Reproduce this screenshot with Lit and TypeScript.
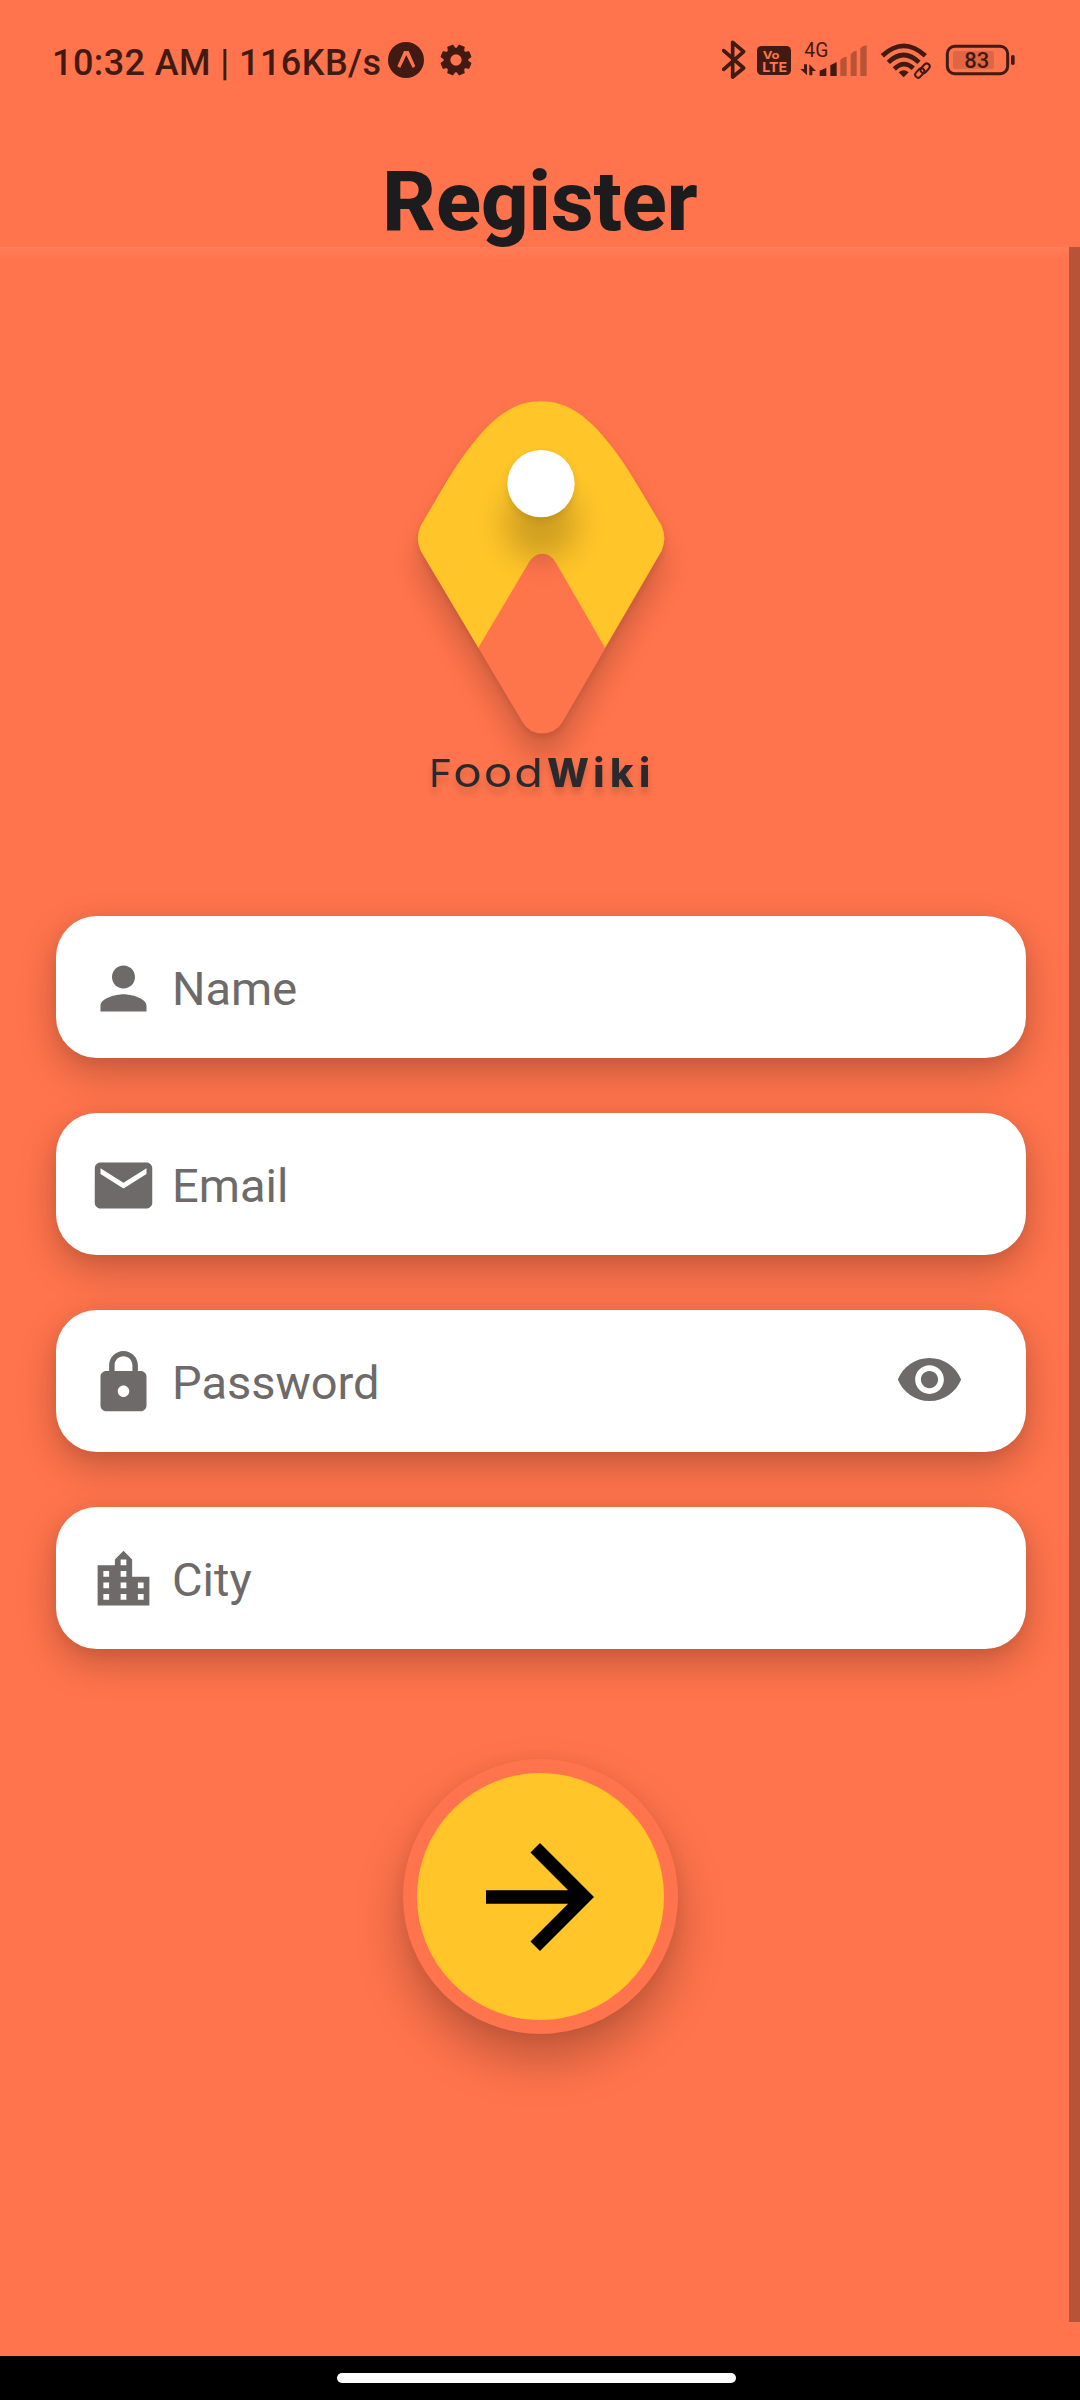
import { LitElement, html, css, svg, nothing } from "lit";
import { customElement, property } from "lit/decorators.js";

const glyphs: Record<string, string> = {
  person:
    "M12 12c2.21 0 4-1.79 4-4s-1.79-4-4-4-4 1.79-4 4 1.79 4 4 4zm0 2c-2.67 0-8 1.34-8 4v2h16v-2c0-2.66-5.33-4-8-4z",
  email:
    "M20 4H4c-1.1 0-1.99.9-1.99 2L2 18c0 1.1.9 2 2 2h16c1.1 0 2-.9 2-2V6c0-1.1-.9-2-2-2zm0 4l-8 5-8-5V6l8 5 8-5v2z",
  lock:
    "M18 8h-1V6c0-2.76-2.24-5-5-5S7 3.240 7 6v2H6c-1.100 0-2 .9-2 2v10c0 1.100.9 2 2 2h12c1.100 0 2-.9 2-2V10c0-1.100-.9-2-2-2zm-6 9c-1.100 0-2-.9-2-2s.9-2 2-2 2 .9 2 2-.9 2-2 2zm3.100-9H8.900V6c0-1.710 1.390-3.100 3.100-3.100 1.710 0 3.100 1.390 3.100 3.100v2z",
  city:
    "M15 11V5l-3-3-3 3v2H3v14h18V11h-6zm-8 8H5v-2h2v2zm0-4H5v-2h2v2zm0-4H5V9h2v2zm6 8h-2v-2h2v2zm0-4h-2v-2h2v2zm0-4h-2V9h2v2zm0-4h-2V5h2v2zm6 12h-2v-2h2v2zm0-4h-2v-2h2v2z",
  eye:
    "M12 4.500C7 4.500 2.730 7.610 1 12c1.730 4.390 6 7.500 11 7.500s9.270-3.110 11-7.500c-1.730-4.390-6-7.500-11-7.500zM12 17c-2.760 0-5-2.240-5-5s2.240-5 5-5 5 2.240 5 5-2.240 5-5 5zm0-8c-1.660 0-3 1.340-3 3s1.340 3 3 3 3-1.340 3-3-1.340-3-3-3z",
  arrow: "M12 4l-1.410 1.410L16.170 11H4v2h12.170l-5.580 5.590L12 20l8-8z",
};

@customElement("md-icon")
class MdIcon extends LitElement {
  @property() name = "";
  static styles = css`
    :host { display: block; }
    svg { display: block; width: 100%; height: 100%; fill: currentColor; }
  `;
  render() {
    return html`<svg viewBox="0 0 24 24"><path d=${glyphs[this.name] ?? ""}></path></svg>`;
  }
}

@customElement("status-bar")
class StatusBar extends LitElement {
  static styles = css`
    :host {
      display: flex;
      justify-content: space-between;
      height: 120px;
      padding: 20px 40px 0 52px;
      box-sizing: border-box;
      color: #411b11;
    }
    .left { display: flex; align-items: center; height: 80px; }
    .clock {
      font: 500 36px/42px Roboto, sans-serif;
      letter-spacing: 0.42px;
      white-space: pre;
      width: 336px;
      padding-top: 5px;
    }
    svg { display: block; }
    .gear { margin-left: 16px; }
    .tiny { font-family: Roboto, sans-serif; fill: currentColor; }
    .badge { font-family: Inter, sans-serif; font-weight: 700; fill: #ff744c; }
  `;
  render() {
    const teeth = [22.5, 67.5, 112.5, 157.5, 202.5, 247.5, 292.5, 337.5];
    return html`
      <div class="left">
        <span class="clock">10:32 AM | 116KB/s</span>
        <svg width="36" height="36" viewBox="0 0 108 108">
          <circle cx="54" cy="54" r="54" fill="currentColor"></circle>
          <path d="M48 27H62L82 73L74 78L55 43L37 78L28 73Z" fill="#ff744c"></path>
          <path d="M55 39L73 78Q55 66 37 78Z" fill="currentColor"></path>
        </svg>
        <svg class="gear" width="32" height="32" viewBox="-48 -48 96 96">
          <circle r="27" fill="none" stroke="currentColor" stroke-width="20"></circle>
          ${teeth.map(
            (a) => svg`<path transform="rotate(${a})" d="M-11 -32L-8 -45H8L11 -32Z" fill="currentColor"
              stroke="currentColor" stroke-width="3" stroke-linejoin="round"></path>`,
          )}
        </svg>
      </div>
      <svg width="340" height="80" viewBox="0 0 1020 240" fill="currentColor">
        <path d="M71 92L131 144L98 171V67L131 95L71 148" fill="none" stroke="currentColor"
          stroke-width="11" stroke-linejoin="round" stroke-linecap="round"></path>
        <rect x="171" y="78" width="102" height="87" rx="14"></rect>
        <text class="badge" x="188" y="116" font-size="33" textLength="51" lengthAdjust="spacingAndGlyphs">Vo</text>
        <text class="badge" x="187" y="155" font-size="40" textLength="74" lengthAdjust="spacingAndGlyphs">LTE</text>
        <text class="tiny" x="313" y="110" font-size="58" textLength="72" lengthAdjust="spacingAndGlyphs">4G</text>
        <path d="M312 133H321V166L301 147H312ZM328 166V133L348 153H337V166Z"></path>
        <path d="M359 168V152L379 143V168ZM391 168V136L410 126V168Z"></path>
        <path d="M421 168V119Q430 110 440 110V168ZM452 168V102Q461 92 470 92V168ZM481 168V84Q490 76 500 76V168Z" opacity=".37"></path>
        <g fill="none" stroke="currentColor" stroke-width="14">
          <path d="M547 107Q611 48 676 107"></path>
          <path d="M565 127Q611 83 657 127"></path>
          <path d="M583 147Q611 119 640 145"></path>
        </g>
        <path d="M596 157Q611 144 626 157L611 172Z"></path>
        <g fill="none" stroke="currentColor" stroke-width="6">
          <rect x="-17" y="-9" width="32" height="18" rx="9" transform="translate(676 144) rotate(-48)"></rect>
          <rect x="-17" y="-9" width="32" height="18" rx="9" transform="translate(660 158) rotate(-48)"></rect>
        </g>
        <rect x="742" y="79" width="181" height="82" rx="22" fill="none" stroke="currentColor" stroke-width="9"></rect>
        <rect x="759" y="93" width="123" height="54" rx="6" opacity=".16"></rect>
        <rect x="933" y="105" width="11" height="30" rx="5"></rect>
        <text class="tiny" x="793" y="145" font-size="66" font-weight="500" textLength="75" lengthAdjust="spacingAndGlyphs">83</text>
      </svg>
    `;
  }
}

@customElement("food-logo")
class FoodLogo extends LitElement {
  static styles = css`
    :host { display: block; }
    svg { display: block; overflow: visible; }
    .word { font-family: Inter, sans-serif; fill: #2b2c2d; }
  `;
  render() {
    const body =
      "M483 64C408 64 352 104 297 168C247 226 215 280 188 325L122 437Q105 475 122 512L428 1027Q448 1060 487 1060Q526 1060 547 1027L845 512Q861 475 845 437L778 325C751 280 719 226 669 168C614 104 558 64 483 64Z";
    return html`
      <svg width="320" height="460" viewBox="0 0 960 1380">
        <defs>
          <clipPath id="body"><path d=${body}></path></clipPath>
          <filter id="drop" x="-30%" y="-20%" width="160%" height="160%">
            <feDropShadow dx="0" dy="12" stdDeviation="9" flood-color="#000" flood-opacity=".1"></feDropShadow>
          </filter>
          <filter id="soft" x="-50%" y="-50%" width="200%" height="200%">
            <feGaussianBlur stdDeviation="42"></feGaussianBlur>
          </filter>
          <filter id="dot" x="-100%" y="-100%" width="300%" height="300%">
            <feGaussianBlur stdDeviation="46"></feGaussianBlur>
          </filter>
          <filter id="near" x="-100%" y="-100%" width="300%" height="300%">
            <feGaussianBlur stdDeviation="12"></feGaussianBlur>
          </filter>
          <filter id="type" x="-10%" y="-50%" width="120%" height="250%">
            <feDropShadow dx="0" dy="20" stdDeviation="9" flood-color="#000" flood-opacity=".15"></feDropShadow>
          </filter>
        </defs>
        <path d=${body} transform="translate(0 76)" filter="url(#soft)" opacity=".17"></path>
        <path d=${body} fill="#ff744c" filter="url(#drop)"></path>
        <path fill="#ffc529"
          d="M483 64C408 64 352 104 297 168C247 226 215 280 188 325L122 437Q105 475 122 512L295 803L447 547Q462 521 487 521Q512 521 527 547L675 803L845 512Q861 475 845 437L778 325C751 280 719 226 669 168C614 104 558 64 483 64Z"></path>
        <g clip-path="url(#body)">
          <circle cx="483" cy="430" r="110" filter="url(#dot)" opacity=".19"></circle>
          <circle cx="483" cy="320" r="99" filter="url(#near)" opacity=".12"></circle>
        </g>
        <circle cx="483" cy="311" r="101" fill="#fff"></circle>
        <g filter="url(#type)">
          <text class="word" y="1221" font-weight="400">
            <tspan x="148" font-size="116">F</tspan><tspan x="220" font-size="126" textLength="86" lengthAdjust="spacingAndGlyphs">o</tspan><tspan x="311" font-size="126" textLength="86" lengthAdjust="spacingAndGlyphs">o</tspan><tspan x="403" font-size="120" textLength="86" lengthAdjust="spacingAndGlyphs">d</tspan>
          </text>
          <text class="word" y="1221" font-size="119" font-weight="800" x="501 640 690 777">Wiki</text>
        </g>
      </svg>
    `;
  }
}

@customElement("text-field")
class TextField extends LitElement {
  @property() icon = "";
  @property() label = "";
  @property({ type: Boolean }) secret = false;
  static styles = css`
    :host {
      display: flex;
      align-items: center;
      height: 142px;
      padding: 2px 62px 0 33px;
      box-sizing: border-box;
      border-radius: 41px;
      background: #fff;
      color: #6d6a69;
      box-shadow: 0 14px 38px rgba(0, 0, 0, 0.23), 0 3px 14px rgba(0, 0, 0, 0.06);
    }
    .lead { width: 69px; height: 69px; }
    .label { flex: 1; margin-left: 14px; font: 400 47px/56px Roboto, sans-serif; padding-top: 2px; }
    .peek { width: 69px; height: 69px; margin-bottom: 6px; }
  `;
  render() {
    return html`
      <md-icon class="lead" name=${this.icon}></md-icon>
      <span class="label">${this.label}</span>
      ${this.secret ? html`<md-icon class="peek" name="eye"></md-icon>` : nothing}
    `;
  }
}

@customElement("app-root")
class AppRoot extends LitElement {
  static styles = css`
    :host {
      display: flex;
      flex-direction: column;
      width: 1080px;
      height: 2400px;
      overflow: hidden;
      background: #ff744c;
    }
    .title {
      height: 127px;
      margin: 0;
      box-sizing: border-box;
      padding-top: 33px;
      text-align: center;
      font: 800 83px/97px Roboto, sans-serif;
      color: #1c1c1e;
    }
    .content {
      display: flex;
      flex: 1;
      background: linear-gradient(rgba(255, 255, 255, 0.07), rgba(255, 255, 255, 0) 12px);
    }
    .form {
      display: flex;
      flex-direction: column;
      flex: 1;
      padding: 133px 43px 0 56px;
    }
    .logo { align-self: center; margin-right: 2px; }
    .fields { display: flex; flex-direction: column; gap: 55px; margin-top: 76px; }
    .go {
      display: flex;
      align-items: center;
      justify-content: center;
      align-self: center;
      width: 275px;
      height: 275px;
      margin: 110px 1px 0 0;
      padding: 0 2px 0 0;
      box-sizing: border-box;
      border: 14px solid #ff744c;
      border-radius: 50%;
      background: #ffc529;
      color: #000;
      box-shadow: 0 26px 48px rgba(0, 0, 0, 0.25), 0 2px 16px rgba(0, 0, 0, 0.06);
    }
    .arrow { width: 162px; height: 162px; }
    .scrollbar { width: 11px; height: 2075px; background: #b75337; }
    .nav {
      display: flex;
      justify-content: center;
      height: 44px;
      padding: 17px 7px 0 0;
      box-sizing: border-box;
      background: #000;
    }
    .pill { width: 399px; height: 10px; border-radius: 5px; background: #fff; }
  `;
  render() {
    return html`
      <status-bar></status-bar>
      <h1 class="title">Register</h1>
      <main class="content">
        <div class="form">
          <food-logo class="logo"></food-logo>
          <div class="fields">
            <text-field icon="person" label="Name"></text-field>
            <text-field icon="email" label="Email"></text-field>
            <text-field icon="lock" label="Password" secret></text-field>
            <text-field icon="city" label="City"></text-field>
          </div>
          <button class="go" aria-label="Continue"><md-icon class="arrow" name="arrow"></md-icon></button>
        </div>
        <div class="scrollbar"></div>
      </main>
      <div class="nav"><div class="pill"></div></div>
    `;
  }
}
